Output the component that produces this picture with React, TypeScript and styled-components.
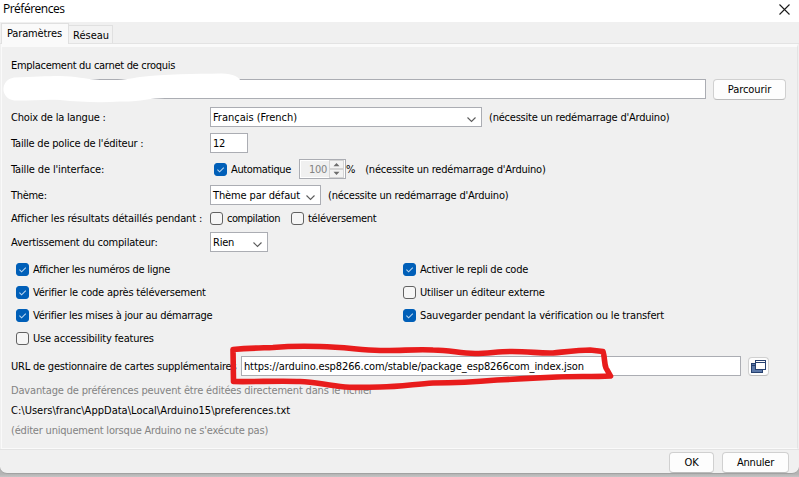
import React from 'react';
import styled, { createGlobalStyle } from 'styled-components';

const Global = createGlobalStyle`
  * { box-sizing: border-box; }
  body { margin: 0; background: #b9b9b9; overflow: hidden; }
`;

const Backdrop = styled.div`
  width: 799px;
  height: 477px;
  background: linear-gradient(#b4b4b4 470px, #b4b4b4 474px, #c4c4c4 477px);
`;

const Window = styled.main`
  position: relative;
  display: flex;
  flex-direction: column;
  width: 799px;
  height: 474px;
  overflow: hidden;
  background: #f0f0f0;
  border-bottom: 1px solid #a2a2a2;
  border-radius: 0 0 7px 7px;
  color: #000;
  font-family: 'DejaVu Sans Condensed', 'DejaVu Sans', sans-serif;
  font-size: 11px;
  line-height: 14px;
  white-space: pre;
`;

const TitleBar = styled.header`
  display: flex;
  align-items: center;
  justify-content: space-between;
  flex: 0 0 22px;
  padding: 0 9px 4px 3px;
  background: #fff;
  font-family: 'Open Sans', 'Noto Sans', sans-serif;
  font-size: 12px;
  letter-spacing: -0.5px;
`;

const CloseIcon = styled.svg`
  width: 11px;
  height: 11px;
  flex: none;
`;

const TabStrip = styled.nav`
  display: flex;
  align-items: flex-end;
  flex: 0 0 22px;
  padding-left: 1px;
  border-bottom: 1px solid #e3e3e3;
`;

const Tab = styled.div<{ $active?: boolean; $width: number }>`
  display: flex;
  align-items: flex-start;
  width: ${p => p.$width}px;
  height: ${p => (p.$active ? 21 : 18)}px;
  margin-bottom: ${p => (p.$active ? -1 : 0)}px;
  padding: ${p => (p.$active ? '1px 0 0 5px' : '1px 0 0 4px')};
  background: ${p => (p.$active ? '#fafafa' : '#f2f2f2')};
  border: 1px solid #e0e0e0;
  border-bottom: 0;
  border-left-width: ${p => (p.$active ? 1 : 0)}px;
`;

const Panel = styled.section`
  display: flex;
  flex-direction: column;
  flex: 0 0 405px;
  margin: 0 1px;
  padding: 10px 0 0 9px;
  border: 1px solid #e3e3e3;
  border-top: 3px solid #fafafa;
  border-bottom: 1px solid #fafafa;
  border-left-color: #fafafa;
`;

const Text = styled.span<{ $track?: number; $muted?: boolean }>`
  flex: none;
  padding-top: 2px;
  letter-spacing: ${p => p.$track ?? -0.2}px;
  color: ${p => (p.$muted ? '#838383' : '#000')};
`;

const Row = styled.div<{ $h: number }>`
  display: flex;
  align-items: center;
  flex: 0 0 ${p => p.$h}px;
`;

const FormRow = styled(Row)`
  display: grid;
  grid-template-columns: 199px 1fr;
`;

const Controls = styled.div<{ $indent?: number }>`
  display: flex;
  align-items: center;
  padding-left: ${p => p.$indent ?? 0}px;
`;

const Field = styled.div<{ $w: number; $ml?: number }>`
  display: flex;
  align-items: center;
  justify-content: space-between;
  flex: none;
  width: ${p => p.$w}px;
  height: 20px;
  margin-left: ${p => p.$ml ?? 0}px;
  padding: 0 4px 0 2px;
  background: #fff;
  border: 1px solid #abadb3;
`;

const Hint = styled(Text)<{ $ml?: number }>`
  margin-left: ${p => p.$ml ?? 7}px;
`;

const Spinner = styled.div`
  display: flex;
  align-items: center;
  width: 47px;
  height: 20px;
  margin-left: 8px;
  padding: 1px;
  background: #f0f0f0;
  border: 1px solid #abadb3;
  box-shadow: inset 0 0 0 1px #fff;
`;

const SpinnerValue = styled.div`
  flex: 1;
  padding: 2px 0 0 8px;
  color: #838383;
  letter-spacing: -0.3px;
`;

const SpinnerArrows = styled.svg`
  width: 15px;
  height: 18px;
  flex: none;
`;

const Box = styled.span<{ $on?: boolean }>`
  display: flex;
  flex: none;
  width: 13px;
  height: 13px;
  margin-right: 4px;
  background: ${p => (p.$on ? '#005fb8' : '#f6f6f6')};
  border: 1px solid ${p => (p.$on ? '#005fb8' : '#626262')};
  border-radius: 3px;
`;

const CheckItem = styled.label<{ $mr?: number }>`
  display: flex;
  align-items: center;
  margin-right: ${p => p.$mr ?? 0}px;
`;

const Options = styled.div`
  display: grid;
  grid-template-columns: 387px 1fr;
  grid-auto-rows: 23px;
  align-items: center;
  padding-left: 5px;
  margin-top: 1px;

  ${Text} {
    padding-top: 1px;
  }
`;

const Button = styled.button<{ $w: number; $ml?: number }>`
  display: flex;
  align-items: center;
  justify-content: center;
  flex: none;
  width: ${p => p.$w}px;
  height: 21px;
  margin: 0 0 0 ${p => p.$ml ?? 0}px;
  padding: 0;
  background: #fdfdfd;
  border: 1px solid #d0d0d0;
  border-bottom-color: #bcbcbc;
  border-radius: 4px;
  color: #000;
  font: inherit;

  ${Text} {
    padding-top: 1px;
  }
`;

const IconButton = styled(Button)`
  height: 19px;
`;

const Footer = styled.footer`
  display: flex;
  justify-content: flex-end;
  flex: 1;
  padding: 2px 10px 0 0;
  border-top: 1px solid #e3e3e3;
`;

const Markings = styled.svg`
  position: absolute;
  inset: 0;
  width: 799px;
  height: 474px;
  pointer-events: none;
`;

const ChevronIcon = styled.svg`
  width: 11px;
  height: 8px;
  margin-top: 3px;
`;

const Chevron = () => (
  <ChevronIcon viewBox="0 0 11 8" fill="none" stroke="#5c5c5c" strokeWidth="1.1">
    <path d="M1.5 2.5 5.5 6.5 9.5 2.5" />
  </ChevronIcon>
);

type CheckProps = { label: string; on?: boolean; track?: number; gap?: number };

const Check = ({ label, on, track, gap }: CheckProps) => (
  <CheckItem $mr={gap}>
    <Box $on={on}>
      {on && (
        <svg width="11" height="11" viewBox="0 0 11 11" fill="none" stroke="#b9d6f0" strokeWidth="1.1">
          <path d="M2.4 5.6 4.6 7.8 8.8 3.6" />
        </svg>
      )}
    </Box>
    <Text $track={track}>{label}</Text>
  </CheckItem>
);

const RESTART = "(nécessite un redémarrage d'Arduino)";

export default function App() {
  return (
    <Backdrop>
      <Global />
      <Window>
        <TitleBar>
          <span>Préférences</span>
          <CloseIcon viewBox="0 0 11 11" stroke="#1a1a1a" strokeWidth="1.1">
            <path d="M.5 .5 10.5 10.5M10.5 .5 .5 10.5" />
          </CloseIcon>
        </TitleBar>
        <TabStrip>
          <Tab $active $width={68}><Text $track={-0.14}>Paramètres</Text></Tab>
          <Tab $width={44}><Text $track={0}>Réseau</Text></Tab>
        </TabStrip>
        <Panel>
          <Row $h={16}><Text $track={-0.29}>Emplacement du carnet de croquis</Text></Row>
          <Row $h={32}>
            <Field $w={695} />
            <Button $w={73} $ml={7}><Text $track={-0.05}>Parcourir</Text></Button>
          </Row>
          <FormRow $h={24}>
            <Text $track={-0.2}>Choix de la langue :</Text>
            <Controls>
              <Field $w={272}><Text $track={-0.02}>Français (French)</Text><Chevron /></Field>
              <Hint $track={-0.22}>{RESTART}</Hint>
            </Controls>
          </FormRow>
          <FormRow $h={28}>
            <Text $track={-0.2}>Taille de police de l'éditeur :</Text>
            <Controls><Field $w={38}><Text>12</Text></Field></Controls>
          </FormRow>
          <FormRow $h={24}>
            <Text $track={-0.14}>Taille de l'interface:</Text>
            <Controls $indent={4}>
              <Check on label="Automatique" track={-0.36} />
              <Spinner>
                <SpinnerValue>100</SpinnerValue>
                <SpinnerArrows viewBox="0 0 15 18">
                  <rect x=".5" y=".5" width="14" height="8" fill="#f3f3f3" stroke="#d4d4d4" />
                  <rect x=".5" y="9.5" width="14" height="8" fill="#f3f3f3" stroke="#d4d4d4" />
                  <path d="M4.5 6.3 7.5 3 10.5 6.3ZM4.5 11.7 7.5 15 10.5 11.7Z" fill="#6d6d6d" />
                </SpinnerArrows>
              </Spinner>
              <Text>%</Text>
              <Hint $track={-0.22} $ml={10}>{RESTART}</Hint>
            </Controls>
          </FormRow>
          <FormRow $h={28}>
            <Text $track={-0.3}>Thème:</Text>
            <Controls>
              <Field $w={111}><Text $track={-0.12}>Thème par défaut</Text><Chevron /></Field>
              <Hint $track={-0.22}>{RESTART}</Hint>
            </Controls>
          </FormRow>
          <FormRow $h={18}>
            <Text $track={-0.14}>Afficher les résultats détaillés pendant :</Text>
            <Controls>
              <Check label="compilation" track={-0.45} gap={11} />
              <Check label="téléversement" track={-0.27} />
            </Controls>
          </FormRow>
          <FormRow $h={30}>
            <Text $track={-0.2}>Avertissement du compilateur:</Text>
            <Controls><Field $w={58}><Text>Rien</Text><Chevron /></Field></Controls>
          </FormRow>
          <Options>
            <Check on label="Afficher les numéros de ligne" track={-0.25} />
            <Check on label="Activer le repli de code" track={-0.25} />
            <Check on label="Vérifier le code après téléversement" />
            <Check label="Utiliser un éditeur externe" />
            <Check on label="Vérifier les mises à jour au démarrage" track={-0.25} />
            <Check on label="Sauvegarder pendant la vérification ou le transfert" track={-0.15} />
            <Check label="Use accessibility features" />
          </Options>
          <Row $h={32}>
            <Text $track={-0.21}>URL de gestionnaire de cartes supplémentaires</Text>
            <Field $w={500} $ml={4.5}>
              <Text $track={-0.09}>https://arduino.esp8266.com/stable/package_esp8266com_index.json</Text>
            </Field>
            <IconButton $w={21} $ml={7} aria-label="Ouvrir">
              <svg width="17" height="15" viewBox="0 0 17 15" stroke="#26406f">
                <rect x="1.5" y="4.500" width="11" height="9" fill="#5b78a8" />
                <path d="M2 6.5H5" />
                <rect x="5.500" y="1.500" width="10" height="9" fill="#fff" />
                <path d="M5 3.5H16" />
              </svg>
            </IconButton>
          </Row>
          <Row $h={16}>
            <Text $muted $track={-0.17}>Davantage de préférences peuvent être éditées directement dans le fichier</Text>
          </Row>
          <Row $h={24}><Text $track={0.02}>{'C:\\Users\\franc\\AppData\\Local\\Arduino15\\preferences.txt'}</Text></Row>
          <Row $h={16}>
            <Text $muted $track={-0.2}>(éditer uniquement lorsque Arduino ne s'exécute pas)</Text>
          </Row>
        </Panel>
        <Footer>
          <Button $w={45}><Text $track={-0.1}>OK</Text></Button>
          <Button $w={67} $ml={8}><Text $track={-0.2}>Annuler</Text></Button>
        </Footer>
        <Markings viewBox="0 0 799 474">
          <path
            fill="#fff"
            d="M14 77.500C35 77 45 76 60 76C75 76 85 79 100 80C118 81 128 79 140 77C165 74 195 74 220 73.500C232 73 240 77 241 82L241 98L165 98C150 98 140 102 120 101.500C100 103 80 102 60 100C45 99 28 101 14 100.500C0 98 0 80 14 77.500Z"
          />
          <path
            fill="none"
            stroke="#e81c1c"
            strokeWidth="5.6"
            strokeLinecap="round"
            strokeLinejoin="round"
            d="M233 349.500C250 348 260 348 273 347.500C290 346 305 346 320 346.500C345 347 360 350 380 350.500C400 351 415 349 433 350C450 350 458 353 475 353.500C490 353 500 351.500 512 351.500C530 351.500 540 353.500 553 353C568 351.500 580 350 590 350L603 351.500C605 358 604 363 606 368L610.500 376C590 377 575 376 557 377C535 378 518 379 497 380C475 382 455 383 433 383C415 384 400 387 380 387C365 387 355 388 345 387C325 385 315 382 300 381.500C280 380.500 255 382 233.500 381.500Z"
          />
        </Markings>
      </Window>
    </Backdrop>
  );
}
